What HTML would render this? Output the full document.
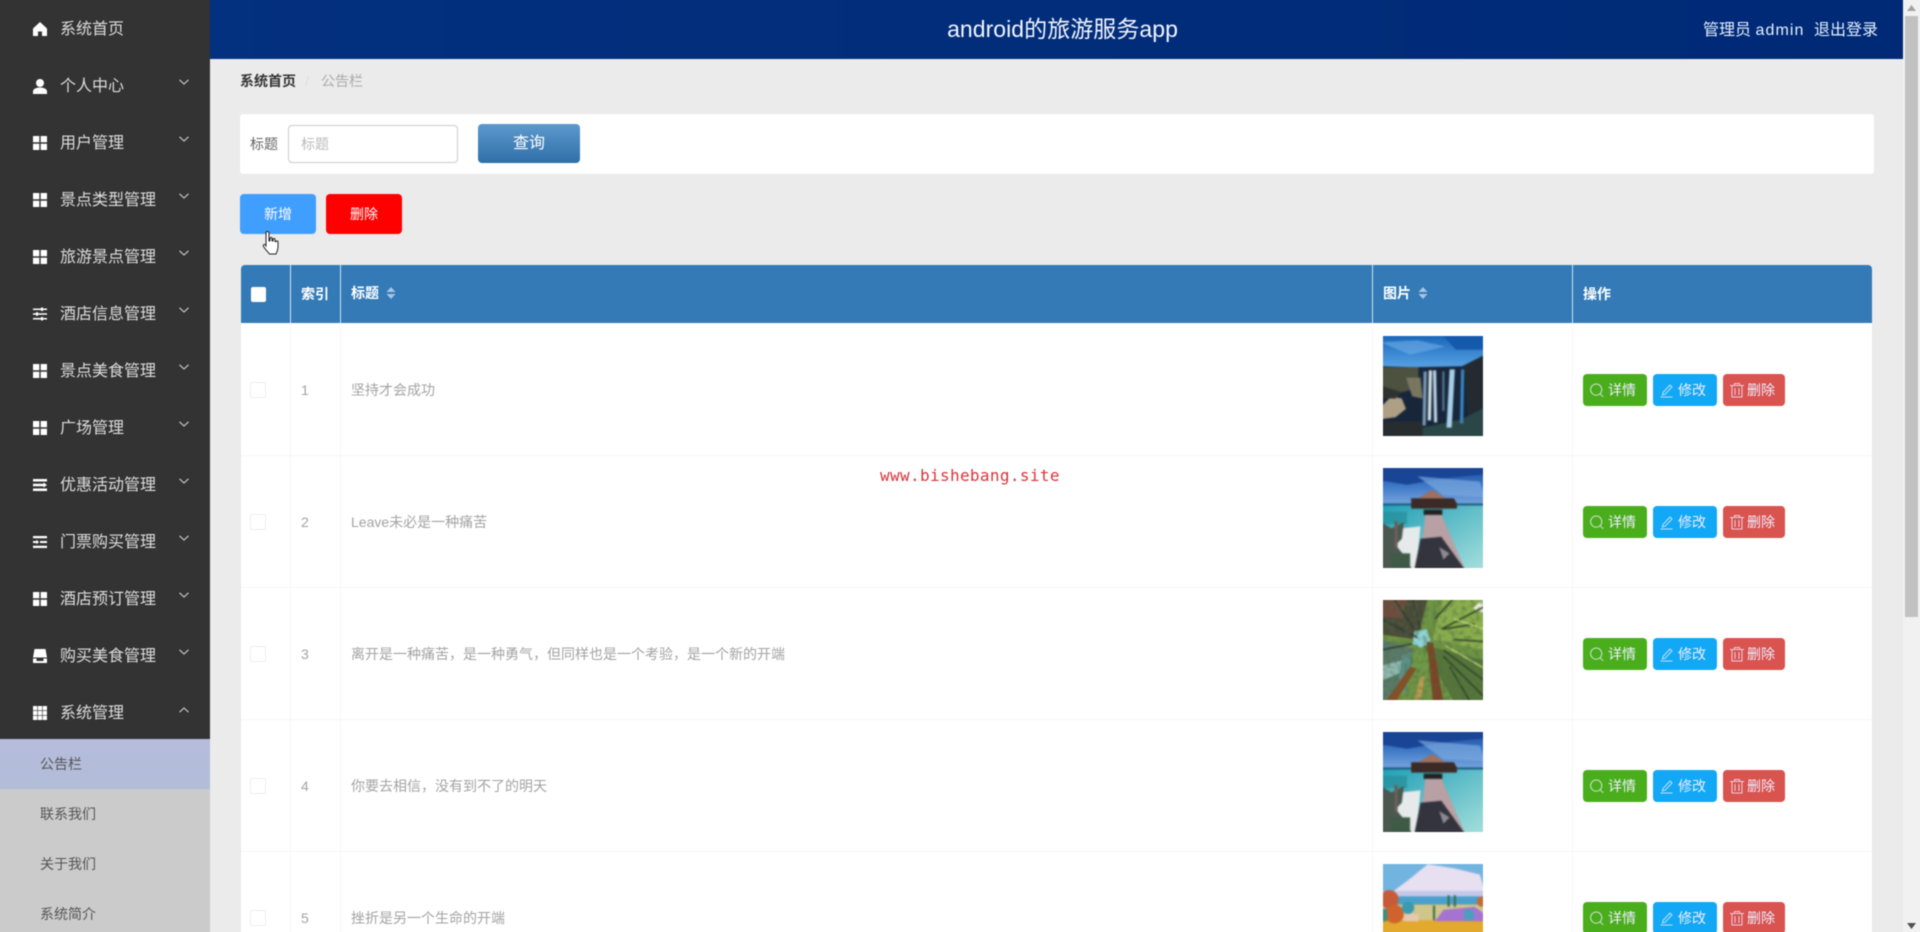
<!DOCTYPE html>
<html lang="zh"><head><meta charset="utf-8"><title>android的旅游服务app</title>
<style>
*{box-sizing:border-box}
html,body{margin:0;padding:0;width:1920px;height:932px;overflow:hidden;background:#ebebec}
body{font-family:"Liberation Sans","Noto Sans CJK SC",sans-serif;font-size:14px}
#r{position:relative;width:1920px;height:932px;filter:blur(.4px)}
.a,.t,.b,svg.i{position:absolute}
.t{line-height:20px;height:20px;white-space:nowrap}
.m{left:60px;font-size:16px;color:#ddd;margin-top:2px}
.s{left:40px;color:#555}
.h{color:#fff;font-weight:bold}
.g{color:#a3a3a3}
.b{height:32px;top:0;border-radius:4px;color:#eef;line-height:32px}
.b svg{position:absolute;top:8px;left:6px;width:16px;height:16px;fill:none;stroke:currentColor;stroke-width:1;opacity:.8}
.b span{position:absolute;top:0;white-space:nowrap}
.c{position:absolute;left:250px;width:16px;height:16px;border:1px solid #eee;border-radius:2px;background:#fff}
.l{position:absolute;background:#f6f6f6}
.ic{margin-top:1px}
.pw{position:absolute;left:1383px;width:100px;height:100px;overflow:hidden}
.pw svg{display:block;filter:blur(.8px);transform:scale(1.04)}
</style></head><body>
<svg width="0" height="0" style="position:absolute">
<defs>
<symbol id="grid" viewBox="0 0 14 14"><path fill="#fff" d="M0 0h6.300v6.300H0zM7.700 0H14v6.300H7.700zM0 7.700h6.300V14H0zM7.700 7.700H14V14H7.700z"/></symbol>
<symbol id="chev" viewBox="0 0 10 6"><path fill="none" stroke="#ccc" stroke-width="1.1" d="M.5.8 5 5 9.500.8"/></symbol>
<symbol id="sort" viewBox="0 0 10 12"><path fill="#a8c4e2" d="M5 0l4.500 5H.5zM5 12l4.500-5H.5z"/></symbol>
<symbol id="bsearch" viewBox="0 0 16 16"><circle cx="7.200" cy="7.600" r="5.600"/><path d="M11.200 11.800l3 3"/></symbol>
<symbol id="bedit" viewBox="0 0 16 16"><path d="M4 10.500 11 3l2 2-7 7.300-2.600.6zM1.500 15h12"/></symbol>
<symbol id="btrash" viewBox="0 0 16 16"><path d="M1 3.500h14M5.500 3.500V1.500h5v2M3 3.500V15h10V3.500M6 6v7M10 6v7"/></symbol>
<filter id="n" x="0" y="0" width="100%" height="100%"><feTurbulence type="fractalNoise" baseFrequency=".22" numOctaves="2" seed="4"/><feColorMatrix values="0 0 0 0 .08 0 0 0 0 .14 0 0 0 0 .06 0 0 0 3.200 -1.400"/></filter>
<linearGradient id="sk1" x1="0" y1="0" x2="0" y2="1"><stop offset="0" stop-color="#1663b8"/><stop offset="1" stop-color="#5aa5e6"/></linearGradient>
<linearGradient id="sk2" x1="0" y1="0" x2="0" y2="1"><stop offset="0" stop-color="#17479b"/><stop offset=".5" stop-color="#3d78c6"/><stop offset="1" stop-color="#7aa6de"/></linearGradient>
<linearGradient id="se2" x1="0" y1="0" x2="1" y2="1"><stop offset="0" stop-color="#1f9fb6"/><stop offset="1" stop-color="#a6dfdc"/></linearGradient>
<symbol id="img1" viewBox="0 0 100 100"><rect width="100" height="100" fill="#17243a"/>
<rect width="100" height="34" fill="url(#sk1)"/><path d="M0 8 28 20 62 12 35 6z" fill="#6eaee6" opacity=".6"/><path d="M58 0h42v15H72z" fill="#1559ad"/>
<path d="M0 31 30 32 78 31 100 20V100H0z" fill="#17263b"/>
<path d="M0 32H36V52L20 56 0 50z" fill="#4c5140"/>
<path d="M0 70 10 60 20 62 24 72 14 80 0 82z" fill="#ae9f85"/><path d="M24 42 38 42 40 62 30 60z" fill="#79765f"/><path d="M0 50 20 56 14 62 0 62z" fill="#2f3330"/>
<path d="M0 84H40V100H0z" fill="#272c2e"/><path d="M40 90 78 82 100 70V100H40z" fill="#2a4646"/>
<path d="M80 30 100 20V68L84 78z" fill="#232b30"/>
<path d="M41 36h3l-1 52h-3z" fill="#7d9ab4"/><path d="M46 35h3l-1 48h-3z" fill="#d8e4ea"/><path d="M50 35h3l1 50h-3z" fill="#bcd4e4"/><path d="M66 34h5l-3 56h-5z" fill="#a8cfe8"/><path d="M77 34h3l-1 52h-3z" fill="#3a86c0"/><path d="M59 36h2v38h-2z" fill="#5a7890"/>
</symbol>
<symbol id="img2" viewBox="0 0 100 100"><rect width="100" height="100" fill="#4ab"/>
<rect width="100" height="38" fill="url(#sk2)"/><path d="M0 0h100v8L60 12 25 18 0 14z" fill="#1a4596"/><path d="M35 10 95 15 100 30 60 28z" fill="#7ba8de" opacity=".7"/>
<rect y="37" width="100" height="63" fill="url(#se2)"/><rect y="36" width="100" height="2" fill="#1c5a82"/>
<path d="M0 62 38 58 34 100H0z" fill="#e6eaea"/><path d="M0 44h25v12H0z" fill="#278f98" opacity=".7"/>
<path d="M0 54 10 60 22 54 20 70 14 76 24 88 30 100H0z" fill="#4a5850"/><path d="M13 53h3v26h-3z" fill="#6b6058"/><path d="M10 84h18v16H10z" fill="#3f5a46"/>
<path d="M43 44h14l24 56H36z" fill="#b8a0a4"/><path d="M38 70 58 68 68 82 81 100H32z" fill="#33343e"/><path d="M56 78 66 84 60 90z" fill="#8d8a92"/>
<path d="M29 31 70 31 73 36V41H29z" fill="#3b2a26"/><path d="M36 31 49 23 62 31z" fill="#a0705c"/><path d="M41 42h18v5H41z" fill="#222"/>
</symbol>
<symbol id="img3" viewBox="0 0 100 100"><rect width="100" height="100" fill="#6f9443"/>
<path d="M0 0H45L35 40 0 35z" fill="#4a4a38"/><path d="M0 0H25L20 20 0 18z" fill="#6f4a3c"/>
<path d="M60 0H100V50L50 40z" fill="#8aae4c"/><path d="M100 0V15L88 10z" fill="#eef2e0"/>
<path d="M40 45 100 60V100H70z" fill="#55763a"/><path d="M0 40 35 50 15 100H0z" fill="#59796a"/>
<path d="M32 32 44 30 48 42 38 48 30 44z" fill="#8fd4d8"/><path d="M30 50 45 52 50 70 30 70z" fill="#6d9a45"/>
<path d="M0 65 20 60 18 72 0 80z" fill="#8fb8b0"/>
<path d="M60 50 100 80M60 56 100 96M70 40 100 42M58 30 100 8M52 20 70 0M66 66 86 100M60 30 90 25" stroke="#2f4426" stroke-width="1.600" fill="none"/>
<path d="M70 20 100 30M62 46 100 68" stroke="#c0d870" stroke-width="1.400" fill="none"/>
<path d="M0 20 35 38M30 0 38 30M0 50 30 44M12 0 32 30" stroke="#2d3d33" stroke-width="1.600" fill="none"/>
<path d="M20 55 30 52 25 90 14 95z" fill="#5ea09a" opacity=".6"/>
<path d="M44 42 50 43 60 100H50z" fill="#7c4426"/><path d="M28 66 34 68 14 100H4z" fill="#8a4e24"/><path d="M38 75 42 76 38 100H32z" fill="#c09a50"/>
<rect width="100" height="100" filter="url(#n)" opacity=".5"/></symbol>
<symbol id="img5" viewBox="0 0 100 100"><rect width="100" height="100" fill="#e2a92e"/>
<rect width="100" height="36" fill="#72b4e0"/><path d="M12 28 28 16 45 2 70 6 95 12 100 28z" fill="#e6e0f0"/><path d="M0 28h100v6H0z" fill="#c6c8ea"/>
<rect y="33" width="100" height="8" fill="#4aa0cc"/><rect y="41" width="100" height="17" fill="#cfc68a"/>
<rect y="56" width="100" height="44" fill="#e2a92e"/>
<path d="M52 57 60 46 90 43 100 50V57z" fill="#a673d2"/><path d="M80 47a6 6 0 0 1 8 9h-8z" fill="#4a9fbf"/>
<circle cx="8" cy="36" r="9" fill="#c65b38"/><circle cx="13" cy="50" r="9" fill="#d1622e"/><circle cx="26" cy="44" r="6" fill="#3a9bb0"/><path d="M0 45h6v12H0z" fill="#3c8f7c"/>
<path d="M22 50h14v7H22z" fill="#e8c7b0"/><path d="M64 32h2v11h-2zM70 32h2v11h-2zM50 42h2v14h-2z" fill="#3a6a4a"/><circle cx="97" cy="38" r="5" fill="#c66a3c"/>
</symbol>
</defs></svg>
<div id="r">
<!-- header -->
<div class="a" style="left:210px;top:-4px;width:1693px;height:63px;background:linear-gradient(90deg,#03307f,#002a76)"></div>
<div class="t" style="left:910px;width:305px;top:17px;height:24px;line-height:24px;text-align:center;font-size:23px;letter-spacing:.05px;color:#f2f6ff">android的旅游服务app</div>
<div class="t" style="left:1703px;top:21px;font-size:16px;color:#e4f0ff">管理员 <span style="letter-spacing:1.100px">admin</span></div>
<div class="t" style="left:1814px;top:21px;font-size:16px;color:#e4f0ff">退出登录</div>
<!-- sidebar -->
<div class="a" style="left:-4px;top:-4px;width:214px;height:743px;background:#333"></div>
<div class="a" style="left:-4px;top:739px;width:214px;height:197px;background:#cbcbcb"></div>
<div class="a" style="left:-4px;top:739px;width:214px;height:50px;background:linear-gradient(180deg,#b6bcdd,#b2bdd8)"></div>
<svg class="i ic" style="left:33px;top:21px" width="14" height="14" viewBox="0 0 14 14"><path fill="#fff" d="M7 0 14 6.500V14H9V9.500H5V14H0V6.500z"/></svg>
<div class="t m" style="top:18px">系统首页</div>
<svg class="i ic" style="left:33px;top:78px" width="14" height="15" viewBox="0 0 14 15"><circle cx="7" cy="4" r="4" fill="#fff"/><path fill="#fff" d="M0 15v-2.500C0 10 3 8.500 7 8.500s7 1.500 7 4V15z"/></svg>
<div class="t m" style="top:75px">个人中心</div>
<svg class="i" style="left:179px;top:79px" width="10" height="6"><use href="#chev"/></svg>
<svg class="i ic" style="left:33px;top:135px" width="14" height="14"><use href="#grid"/></svg>
<div class="t m" style="top:132px">用户管理</div>
<svg class="i" style="left:179px;top:136px" width="10" height="6"><use href="#chev"/></svg>
<svg class="i ic" style="left:33px;top:192px" width="14" height="14"><use href="#grid"/></svg>
<div class="t m" style="top:189px">景点类型管理</div>
<svg class="i" style="left:179px;top:193px" width="10" height="6"><use href="#chev"/></svg>
<svg class="i ic" style="left:33px;top:249px" width="14" height="14"><use href="#grid"/></svg>
<div class="t m" style="top:246px">旅游景点管理</div>
<svg class="i" style="left:179px;top:250px" width="10" height="6"><use href="#chev"/></svg>
<svg class="i ic" style="left:33px;top:306px" width="14" height="14" viewBox="0 0 14 14"><path fill="#fff" d="M0 1.500h8V.5h2v1h4v1.500h-4v1H8V3H0zM0 6.300h3v-1h2v1h9v1.500H5v1H3v-1H0zM0 11h8v-1h2v1h4v1.500h-4v1H8v-1H0z"/></svg>
<div class="t m" style="top:303px">酒店信息管理</div>
<svg class="i" style="left:179px;top:307px" width="10" height="6"><use href="#chev"/></svg>
<svg class="i ic" style="left:33px;top:363px" width="14" height="14"><use href="#grid"/></svg>
<div class="t m" style="top:360px">景点美食管理</div>
<svg class="i" style="left:179px;top:364px" width="10" height="6"><use href="#chev"/></svg>
<svg class="i ic" style="left:33px;top:420px" width="14" height="14"><use href="#grid"/></svg>
<div class="t m" style="top:417px">广场管理</div>
<svg class="i" style="left:179px;top:421px" width="10" height="6"><use href="#chev"/></svg>
<svg class="i ic" style="left:33px;top:477px" width="14" height="14" viewBox="0 0 14 14"><path fill="#fff" d="M0 1h14v2.500H0zM0 5.800h10.500V4.500L14 7l-3.500 2.500V8.200H0zM0 10.500h14V13H0z"/></svg>
<div class="t m" style="top:474px">优惠活动管理</div>
<svg class="i" style="left:179px;top:478px" width="10" height="6"><use href="#chev"/></svg>
<svg class="i ic" style="left:33px;top:534px" width="14" height="14" viewBox="0 0 14 14"><path fill="#fff" d="M0 1h14v2.300H0zM0 6h3.500V4.700L6 7 3.500 9.200V8H0zM7 6h7v2H7zM0 10.700h14V13H0z"/></svg>
<div class="t m" style="top:531px">门票购买管理</div>
<svg class="i" style="left:179px;top:535px" width="10" height="6"><use href="#chev"/></svg>
<svg class="i ic" style="left:33px;top:591px" width="14" height="14"><use href="#grid"/></svg>
<div class="t m" style="top:588px">酒店预订管理</div>
<svg class="i" style="left:179px;top:592px" width="10" height="6"><use href="#chev"/></svg>
<svg class="i ic" style="left:33px;top:648px" width="14" height="14" viewBox="0 0 14 14"><path fill="#fff" d="M1.500 0h11L14 8.500H0zM0 9.500h3.500V12h7V9.500H14V14H0z"/></svg>
<div class="t m" style="top:645px">购买美食管理</div>
<svg class="i" style="left:179px;top:649px" width="10" height="6"><use href="#chev"/></svg>
<svg class="i ic" style="left:33px;top:705px" width="14" height="14" viewBox="0 0 14 14"><path fill="#fff" d="M0 0h4.300v4.300H0zM4.900 0h4.200v4.300H4.900zM9.700 0H14v4.300H9.700zM0 4.900h4.300v4.200H0zM4.900 4.900h4.200v4.200H4.900zM9.700 4.900H14v4.200H9.700zM0 9.700h4.300V14H0zM4.900 9.700h4.200V14H4.900zM9.700 9.700H14V14H9.700z"/></svg>
<div class="t m" style="top:702px">系统管理</div>
<svg class="i" style="left:179px;top:707px;transform:scaleY(-1)" width="10" height="6"><use href="#chev"/></svg>
<div class="t s" style="top:754px">公告栏</div>
<div class="t s" style="top:804px">联系我们</div>
<div class="t s" style="top:854px">关于我们</div>
<div class="t s" style="top:904px">系统简介</div>
<!-- breadcrumb -->
<div class="t" style="left:240px;top:71px;font-weight:bold;color:#333">系统首页</div>
<div class="t" style="left:305px;top:71px;color:#ddd">/</div>
<div class="t" style="left:321px;top:71px;color:#aaa">公告栏</div>
<!-- search -->
<div class="a" style="left:240px;top:114px;width:1634px;height:60px;background:#fff;border-radius:3px"></div>
<div class="t" style="left:250px;top:134px;color:#666">标题</div>
<div class="a" style="left:288px;top:125px;width:170px;height:38px;background:#fff;border:1px solid #ccc;border-radius:4px"></div>
<div class="t" style="left:301px;top:134px;color:#bbb">标题</div>
<div class="a" style="left:478px;top:124px;width:102px;height:39px;border-radius:4px;background:linear-gradient(180deg,#5c99cd,#2f6fa9);color:#fff;font-size:16px;line-height:40px;text-align:center">查询</div>
<!-- buttons -->
<div class="a" style="left:240px;top:194px;width:76px;height:40px;border-radius:4px;background:#409eff;color:#fff;line-height:40px;text-align:center">新增</div>
<div class="a" style="left:326px;top:194px;width:76px;height:40px;border-radius:4px;background:#f00;color:#fff;line-height:40px;text-align:center">删除</div>
<!-- table -->
<div class="a" style="left:241px;top:323px;width:1631px;height:613px;background:#fff"></div>
<div class="a" style="left:241px;top:265px;width:1631px;height:58px;background:#337ab7;border-radius:4px 4px 0 0"></div>
<div class="a" style="left:290px;top:265px;width:1px;height:58px;background:#cfe2f0"></div>
<div class="a" style="left:340px;top:265px;width:1px;height:58px;background:#cfe2f0"></div>
<div class="a" style="left:1372px;top:265px;width:1px;height:58px;background:#cfe2f0"></div>
<div class="a" style="left:1572px;top:265px;width:1px;height:58px;background:#cfe2f0"></div>
<div class="a" style="left:251px;top:287px;width:15px;height:15px;background:#fff;border-radius:2px"></div>
<div class="t h" style="left:301px;top:284px">索引</div>
<div class="t h" style="left:351px;top:283px">标题</div>
<svg class="i" style="left:386px;top:287px" width="10" height="12"><use href="#sort"/></svg>
<div class="t h" style="left:1383px;top:283px">图片</div>
<svg class="i" style="left:1418px;top:287px" width="10" height="12"><use href="#sort"/></svg>
<div class="t h" style="left:1583px;top:284px">操作</div>
<!-- grid lines -->
<div class="l" style="left:290px;top:323px;width:1px;height:613px"></div>
<div class="l" style="left:340px;top:323px;width:1px;height:613px"></div>
<div class="l" style="left:1372px;top:323px;width:1px;height:613px"></div>
<div class="l" style="left:1572px;top:323px;width:1px;height:613px"></div>
<div class="l" style="left:241px;top:455px;width:1631px;height:1px"></div>
<div class="l" style="left:241px;top:587px;width:1631px;height:1px"></div>
<div class="l" style="left:241px;top:719px;width:1631px;height:1px"></div>
<div class="l" style="left:241px;top:851px;width:1631px;height:1px"></div>
<!-- row 1 -->
<div class="c" style="top:382px"></div><div class="t g" style="left:301px;top:380px">1</div><div class="t g" style="left:351px;top:380px">坚持才会成功</div>
<div class="pw" style="top:336px"><svg width="100" height="100"><use href="#img1"/></svg></div>
<div class="a" style="left:0;top:374px">
<div class="b" style="left:1583px;width:64px;background:#4aae1c"><svg><use href="#bsearch"/></svg><span style="left:25px">详情</span></div>
<div class="b" style="left:1653px;width:64px;background:#12a8f5"><svg><use href="#bedit"/></svg><span style="left:25px">修改</span></div>
<div class="b" style="left:1723px;width:62px;background:#d9534f"><svg><use href="#btrash"/></svg><span style="left:24px">删除</span></div></div>
<!-- row 2 -->
<div class="c" style="top:514px"></div><div class="t g" style="left:301px;top:512px">2</div><div class="t g" style="left:351px;top:512px">Leave未必是一种痛苦</div>
<div class="pw" style="top:468px"><svg width="100" height="100"><use href="#img2"/></svg></div>
<div class="a" style="left:0;top:506px">
<div class="b" style="left:1583px;width:64px;background:#4aae1c"><svg><use href="#bsearch"/></svg><span style="left:25px">详情</span></div>
<div class="b" style="left:1653px;width:64px;background:#12a8f5"><svg><use href="#bedit"/></svg><span style="left:25px">修改</span></div>
<div class="b" style="left:1723px;width:62px;background:#d9534f"><svg><use href="#btrash"/></svg><span style="left:24px">删除</span></div></div>
<!-- row 3 -->
<div class="c" style="top:646px"></div><div class="t g" style="left:301px;top:644px">3</div><div class="t g" style="left:351px;top:644px">离开是一种痛苦，是一种勇气，但同样也是一个考验，是一个新的开端</div>
<div class="pw" style="top:600px"><svg width="100" height="100"><use href="#img3"/></svg></div>
<div class="a" style="left:0;top:638px">
<div class="b" style="left:1583px;width:64px;background:#4aae1c"><svg><use href="#bsearch"/></svg><span style="left:25px">详情</span></div>
<div class="b" style="left:1653px;width:64px;background:#12a8f5"><svg><use href="#bedit"/></svg><span style="left:25px">修改</span></div>
<div class="b" style="left:1723px;width:62px;background:#d9534f"><svg><use href="#btrash"/></svg><span style="left:24px">删除</span></div></div>
<!-- row 4 -->
<div class="c" style="top:778px"></div><div class="t g" style="left:301px;top:776px">4</div><div class="t g" style="left:351px;top:776px">你要去相信，没有到不了的明天</div>
<div class="pw" style="top:732px"><svg width="100" height="100"><use href="#img2"/></svg></div>
<div class="a" style="left:0;top:770px">
<div class="b" style="left:1583px;width:64px;background:#4aae1c"><svg><use href="#bsearch"/></svg><span style="left:25px">详情</span></div>
<div class="b" style="left:1653px;width:64px;background:#12a8f5"><svg><use href="#bedit"/></svg><span style="left:25px">修改</span></div>
<div class="b" style="left:1723px;width:62px;background:#d9534f"><svg><use href="#btrash"/></svg><span style="left:24px">删除</span></div></div>
<!-- row 5 -->
<div class="c" style="top:910px"></div><div class="t g" style="left:301px;top:908px">5</div><div class="t g" style="left:351px;top:908px">挫折是另一个生命的开端</div>
<div class="pw" style="top:864px"><svg width="100" height="100"><use href="#img5"/></svg></div>
<div class="a" style="left:0;top:902px">
<div class="b" style="left:1583px;width:64px;background:#4aae1c"><svg><use href="#bsearch"/></svg><span style="left:25px">详情</span></div>
<div class="b" style="left:1653px;width:64px;background:#12a8f5"><svg><use href="#bedit"/></svg><span style="left:25px">修改</span></div>
<div class="b" style="left:1723px;width:62px;background:#d9534f"><svg><use href="#btrash"/></svg><span style="left:24px">删除</span></div></div>
<!-- watermark -->
<div class="t" style="left:880px;top:466px;font-family:'DejaVu Sans Mono','Liberation Mono',monospace;font-size:16px;letter-spacing:.36px;color:#d8343c">www.bishebang.site</div>
<!-- cursor -->
<svg class="i" style="left:262px;top:230px" width="18" height="26" viewBox="0 0 18 26"><path fill="#fff" stroke="#222" stroke-width="1" d="M5.500 1.500c1 0 1.500.6 1.500 1.500v8l1-.3V8.500c0-1.300 2-1.300 2 0v2.300l1 .1V9.500c0-1.300 2-1.300 2 0v2l1 .2c0-1.200 2-1 2 .3v5c0 3-1.500 5.500-2 7H7.500C6 22 3 19 1.500 16.500.8 15 2 13.800 3.500 15L4 15.800V3c0-1 .6-1.500 1.500-1.500z"/></svg>
<!-- scrollbar -->
<div class="a" style="left:1903px;top:-4px;width:21px;height:940px;background:#f1f1f1"></div>
<div class="a" style="left:1905px;top:16px;width:13px;height:601px;background:#c1c1c1"></div>
<svg class="i" style="left:1907px;top:5px" width="9" height="6" viewBox="0 0 9 6"><path fill="#a3a3a3" d="M4.500 0 9 6H0z"/></svg>
<svg class="i" style="left:1907px;top:923px" width="9" height="6" viewBox="0 0 9 6"><path fill="#505050" d="M4.500 6 9 0H0z"/></svg>
</div>
</body></html>
